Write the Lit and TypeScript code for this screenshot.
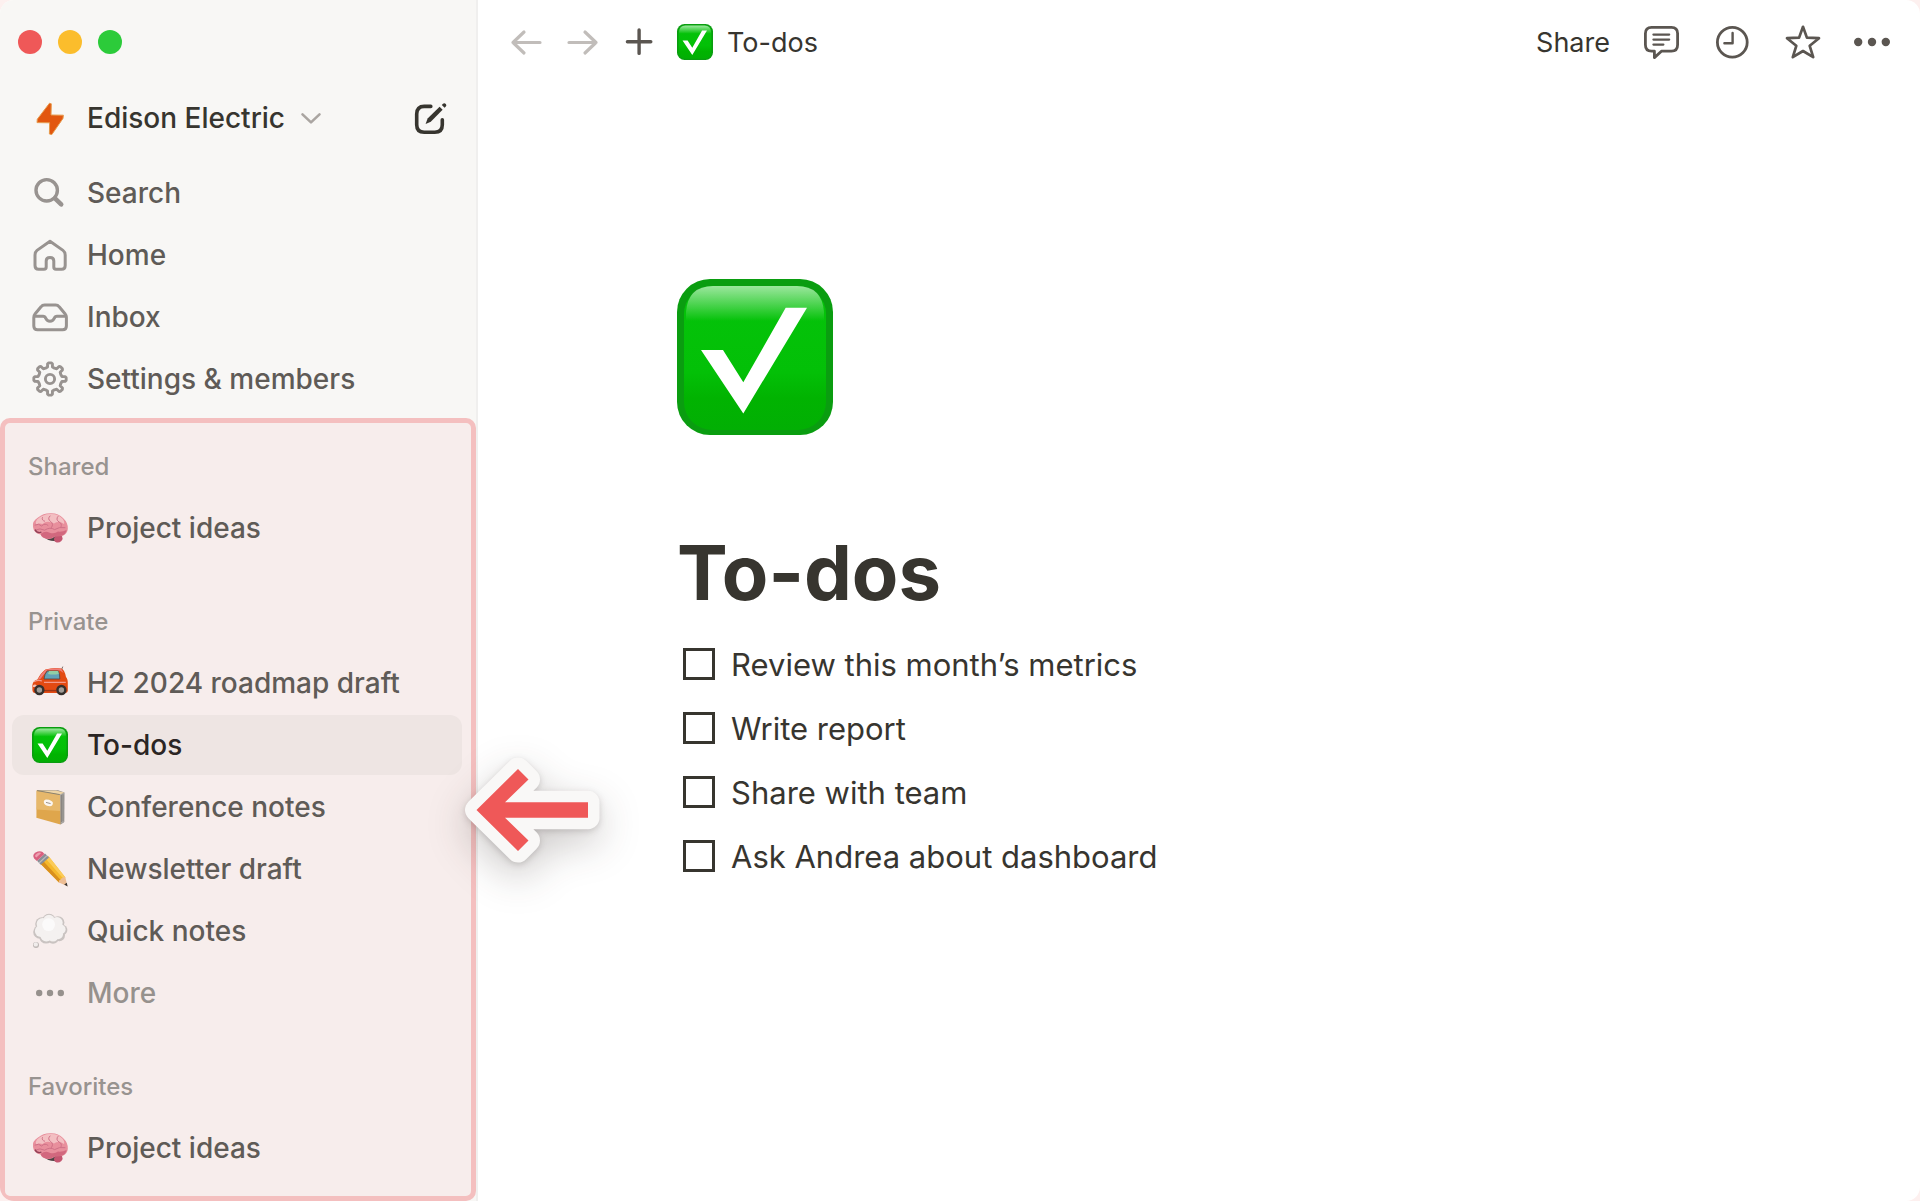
import { LitElement, html, css, svg, nothing, TemplateResult } from "lit";
import { customElement, property, state } from "lit/decorators.js";
import { classMap } from "lit/directives/class-map.js";

/** Outline of an eight-toothed cog centred on (18, 18). */
function cogPath(): string {
  const points: string[] = [];
  const teeth = 8;
  const step = (Math.PI * 2) / teeth;
  const at = (r: number, a: number) =>
    `${(18 + r * Math.sin(a)).toFixed(2)} ${(18 - r * Math.cos(a)).toFixed(2)}`;
  for (let i = 0; i < teeth; i++) {
    const a = i * step;
    points.push(at(12.2, a - step * 0.26), at(15.4, a - step * 0.2));
    points.push(at(16.2, a - step * 0.1), at(16.2, a + step * 0.1));
    points.push(at(15.4, a + step * 0.2), at(12.2, a + step * 0.26));
    points.push(at(11.7, a + step * 0.5));
  }
  return `M${points.join("L")}Z`;
}

const line = (width: number, body: TemplateResult) =>
  svg`<g fill="none" stroke="currentColor" stroke-width=${width} stroke-linecap="round" stroke-linejoin="round">${body}</g>`;

const GLYPHS: Record<string, TemplateResult> = {
  bolt: svg`<path d="M17.5 3.2 L19.3 3.8 L19 15 L31.4 15.2 L31 18.4 L19.8 34.6 L17.4 34 L17.6 22.8 L5 22.6 L5.3 19.2 Z"
    fill="#e2570f" stroke="#e79a4c" stroke-width="1" stroke-linejoin="round"/>`,
  search: svg`${line(3.4, svg`<circle cx="14.7" cy="15.3" r="10.7"/>`)}${line(4.6, svg`<path d="M23 23.4 L29.2 29.4"/>`)}`,
  home: line(3, svg`<path d="M18 4.2 L31 13.4 Q33.2 15 33.2 18 V28.5 Q33.2 32.3 29.6 32.3 H24 Q21.8 32.3 21.8 30 V24 Q21.8 20.6 18 20.6 Q14.2 20.6 14.2 24 V30 Q14.2 32.3 12 32.3 H6.6 Q3 32.3 3 28.5 V18 Q3 15 5 13.4 Z"/>`),
  inbox: line(3, svg`<path d="M12.6 6 H23.6 Q25.8 6 27.2 7.8 L33 14.8 Q34.4 16.5 34.4 18.6 V27 Q34.4 30.8 30.6 30.8 H5.6 Q1.8 30.8 1.8 27 V18.6 Q1.8 16.5 3.2 14.8 L9 7.8 Q10.4 6 12.6 6 Z"/><path d="M2.4 17.2 H11 Q13 17.2 13.8 19.4 Q15 22.2 18 22.2 Q21 22.2 22.2 19.4 Q23 17.2 25 17.2 H33.8"/>`),
  settings: line(2.9, svg`<path d=${cogPath()}/><circle cx="18" cy="18" r="4.6"/>`),
  more: svg`<g fill="currentColor"><circle cx="7.2" cy="18" r="3.2"/><circle cx="18" cy="18" r="3.2"/><circle cx="28.8" cy="18" r="3.2"/></g>`,
  compose: svg`${line(3.6, svg`<path d="M18.8 6.4 H12.2 Q4.7 6.4 4.7 13.9 V24.8 Q4.7 32.3 12.2 32.3 H22.8 Q30.3 32.3 30.3 24.8 V19.8"/>`)}
    <path d="M13.6 24 L15.6 18.6 L27.6 6.8 L30.6 9.8 L18.8 21.8 Z" fill="currentColor"/>
    <path d="M31 3.8 Q32.4 2.6 33.8 4 Q35 5.4 33.8 6.6 L32.6 7.8 L29.8 5 Z" fill="currentColor"/>`,
  chevron: line(2.6, svg`<path d="M9.5 14.4 L18 22.4 L26.5 14.4"/>`),
  back: line(3.2, svg`<path d="M5 18.5 H32 M16 8 L5 18.5 L16 29"/>`),
  forward: line(3.2, svg`<path d="M4 18.5 H31 M20 8 L31 18.5 L20 29"/>`),
  plus: line(3.4, svg`<path d="M5.4 17.7 H28.8 M17.1 6 V29.4"/>`),
  comment: svg`${line(2.8, svg`<path d="M7.6 3.3 H27.4 Q33.6 3.3 33.6 9.5 V20.8 Q33.6 27.2 27.4 27.2 H17.4 L10.4 33.6 V27.2 H7.6 Q1.4 27.2 1.4 20.8 V9.5 Q1.4 3.3 7.6 3.3 Z"/>`)}
    ${line(2.2, svg`<path d="M9.4 10.6 H25.2 M9.4 15.6 H25.2 M9.4 20.6 H19.4"/>`)}`,
  clock: svg`${line(2.8, svg`<circle cx="18.3" cy="18.2" r="14.9"/>`)}${line(2.4, svg`<path d="M18.6 9 V19.2 H10.4"/>`)}`,
  star: line(2.7, svg`<path d="M19 2.8 L22.9 13.6 L35 14.2 L25.7 21.8 L29.2 33.2 L19 27 L8.8 33.2 L12.3 21.8 L3 14.2 L15.1 13.6 Z"/>`),
  dots: svg`<g fill="currentColor"><circle cx="4.2" cy="18" r="4.2"/><circle cx="18" cy="18" r="4.2"/><circle cx="31.8" cy="18" r="4.2"/></g>`,
  brain: svg`
    <path d="M12 27 Q16 31 22 31 L27 32 L25 26 L14 24 Z" fill="#4c4344"/>
    <path d="M1 17 Q0 11 6 7.5 Q11 3.2 18 3.2 Q26 2.6 31 8 Q36.4 13 35.8 19 Q35.4 23.4 31.4 25.4 Q27 27.4 23 26.6 Q20 29.6 15 28.8 Q10 28.4 8.6 24.6 Q1.8 23.4 1 17 Z" fill="#e88f9c"/>
    <path d="M5 9.5 Q11 4 18 4 Q26 3.4 30.6 8.8 Q33 12 32 14 Q27 10.5 22 13.5 Q15 10 10.5 14 Q7 13 4 14.6 Q3 12 5 9.5 Z" fill="#f3bfc2"/>
    <path d="M22.6 27 Q26 24.8 30 26 Q31.4 28.6 29.4 31 Q26.6 33.4 23.6 32 Q21 30 22.6 27 Z" fill="#c45570"/>
    <path d="M8.6 24 Q13 20.6 17 22.4 Q22 24.6 26 21.6 Q31 22 34.6 20 Q34 24 30.6 25.2 Q26 27 23 26.2 Q19 29.4 14.4 28.4 Q9.8 27.8 8.6 24 Z" fill="#d2687e"/>
    <g fill="none" stroke="#cf7187" stroke-width="1" stroke-linecap="round">
      <path d="M3 15 Q7 13 9.6 16 Q13 12.6 16 15.4 M18 6 Q15 9 18.6 11.4 Q22 14 19.4 17.6 M26 6.4 Q23.4 9.4 27 12 Q30.4 13.4 29 17 M3.6 20 Q8 17.6 12.6 20.2 Q18 16.6 22.6 19.6 Q27 16.6 33 17.6 M10.4 7.6 Q9.4 10.4 12.6 11.2"/>
    </g>
    <path d="M3 19.6 Q5 23.6 9.4 22.2" fill="none" stroke="#8f4056" stroke-width="1.3"/>`,
  car: svg`
    <path d="M29.6 4.6 L30.8 1.6" stroke="#7c6d6b" stroke-width="1"/>
    <path d="M13.4 4.6 Q22 2 29.4 3.6 Q32.6 5 34 12 Q36 14 35.8 19 V26 Q35.6 28 33 28 H3 Q.6 28 .4 25 V20 Q1 16 5.4 14.6 Q8.8 8 13.4 4.6 Z" fill="#e34a12"/>
    <path d="M13.6 4.8 Q22 2.4 29.2 3.8 L31.6 8 L28 5.4 H15 L8.6 13.8 L5.6 14.8 Q9 8.4 13.6 4.8 Z" fill="#ef7c78"/>
    <path d="M15.2 6 H26.4 Q28 9.6 27.8 14 H12 Q12.4 9 15.2 6 Z" fill="#62a2b7" stroke="#54433f" stroke-width=".8"/>
    <path d="M17 6 H26.2 L26.8 9 Q21 10 16 9 Z" fill="#91cfa5"/>
    <path d="M2 16.8 Q6 14.6 10 16 M12 17.4 H33.8" stroke="#f39a8c" stroke-width="1.2" fill="none"/>
    <path d="M1 20.4 Q2.8 18.8 4.8 20.4 L4 22 H1 Z" fill="#f6c0b6"/>
    <path d="M12 25.6 H24" stroke="#9d3516" stroke-width="1.4"/>
    <g fill="#35302d"><circle cx="7.4" cy="25" r="5.2"/><circle cx="29.4" cy="25" r="5.2"/></g>
    <g fill="#a29d98"><circle cx="7.4" cy="25" r="2.7"/><circle cx="29.4" cy="25" r="2.7"/></g>`,
  notebook: svg`
    <path d="M5.4 1 L26 1.2 L32.4 3.4 L32.2 33 L28.6 35.4 Z" fill="#8d8780"/>
    <path d="M27.6 5 L32.2 3.6 V33 L28.6 35.2 Z" fill="#a9a6a3"/>
    <path d="M29.4 6 V33 M31 5.4 V32.2" stroke="#77726e" stroke-width=".7"/>
    <path d="M4.6 1.4 L28 5.4 L28.4 35.6 L4.4 28.8 Z" fill="#dfa64c"/>
    <path d="M4.6 1.4 L28 5.4 V22 L4.6 20.6 Z" fill="#e7b86b"/>
    <path d="M4.6 1.4 L28 5.4 L32.2 3.6 L24 1.4 Z" fill="#efd5a5"/>
    <path d="M5 1.6 L27.8 5.6" stroke="#8b826f" stroke-width="1"/>
    <path d="M13.8 10.6 Q17 10.4 19.4 12 Q21.8 13.2 20.4 16 Q19.2 18 15 16.8 Q11.6 15.6 11.8 12.6 Q12 11 13.8 10.6 Z" fill="#fbf6f1"/>
    <path d="M14 13.4 L18.6 14.6" stroke="#9c958e" stroke-width="1"/>`,
  pencil: svg`
    <path d="M8.2 12.6 L16.6 5.2 L33.4 26.4 L27 31.6 Z" fill="#f5b82b"/>
    <path d="M8.2 12.6 L11.2 10 L29.6 30 L27 31.6 Z" fill="#d98f1d"/>
    <path d="M13.8 7.8 L16.6 5.2 L33.4 26.4 L31.4 27.8 Z" fill="#fbcb58"/>
    <path d="M27 31.6 Q26.4 29 28.6 28.8 Q29 26.6 31 27 Q31.4 25.2 33.4 26.4 L35.4 35.2 Z" fill="#edbd93"/>
    <path d="M32.2 33.6 L34.8 31.8 L35.6 35.4 Z" fill="#3b3635"/>
    <path d="M5 9.8 L13 2.6 L17 6.6 L8.8 13.8 Z" fill="#8a8e95"/>
    <path d="M7 12 L15 4.6" stroke="#b9bcc1" stroke-width="1.2"/>
    <path d="M2.2 7.4 Q-.2 4.2 3.6 1.6 Q7.6 -1 10.6 1 L12.4 3 L4.8 10 Z" fill="#d9607f"/>
    <path d="M3.2 5.6 Q2.4 4 5 2.4 Q7.4 .8 9.2 2 L4.4 6.6 Z" fill="#ee9fb0"/>`,
  thought: svg`
    <g fill="#c9c3c1">
      <circle cx="10" cy="11" r="6.8"/><circle cx="17" cy="7.6" r="6.8"/><circle cx="26" cy="9.6" r="6.4"/><circle cx="30" cy="17" r="5.4"/>
      <circle cx="8" cy="19" r="6.8"/><circle cx="14" cy="24" r="6.6"/><circle cx="21" cy="24.8" r="6"/><circle cx="27.4" cy="22.6" r="5.6"/>
    </g>
    <g fill="#f4f1f0">
      <circle cx="10.6" cy="11" r="6"/><circle cx="17" cy="7.6" r="5.9"/><circle cx="25" cy="9.8" r="5.7"/><circle cx="28.8" cy="16.4" r="4.8"/>
      <circle cx="9" cy="18" r="6.1"/><circle cx="14.4" cy="22.6" r="6"/><circle cx="21" cy="23.2" r="5.4"/><circle cx="26" cy="21.2" r="5"/>
      <circle cx="18" cy="15" r="9"/>
    </g>
    <circle cx="16.6" cy="11.6" r="6.4" fill="#fbfafa"/>
    <circle cx="4" cy="32" r="3" fill="#bdb6b4"/><circle cx="3.8" cy="31.4" r="2.2" fill="#f1edec"/>`,
};

@customElement("ui-glyph")
export class UiGlyph extends LitElement {
  @property() name = "";

  static styles = css`
    :host {
      display: block;
      flex: none;
      width: 36px;
      height: 36px;
    }
    .glyph {
      display: block;
      width: 100%;
      height: 100%;
      overflow: visible;
    }
  `;

  private checkMark() {
    return html`<svg class="glyph" viewBox="0 0 156 156" aria-hidden="true">
      <defs>
        <linearGradient id="face" x1="0" y1="0" x2="0" y2="1">
          <stop offset="0" stop-color="#05c30a" />
          <stop offset=".6" stop-color="#03c007" />
          <stop offset=".78" stop-color="#01b301" />
          <stop offset="1" stop-color="#02af04" />
        </linearGradient>
        <linearGradient id="shine" x1="0" y1="0" x2="0" y2="1">
          <stop offset="0" stop-color="#fff" stop-opacity=".6" />
          <stop offset="1" stop-color="#fff" stop-opacity="0" />
        </linearGradient>
      </defs>
      <rect width="156" height="156" rx="33" fill="#0a9d10" />
      <rect x="7" y="7" width="142" height="144" rx="28" fill="url(#face)" />
      <path d="M9 42 V33 Q11 7 36 7 H120 Q145 7 147 33 V42 Z" fill="url(#shine)" />
      <path d="M24 71 H46 L66.300 103.300 L108.700 28.700 H130 L66.300 134.500 Z" fill="#fff" />
    </svg>`;
  }

  render() {
    if (this.name === "check") return this.checkMark();
    return html`<svg class="glyph" viewBox="0 0 36 36" aria-hidden="true">${GLYPHS[this.name] ?? nothing}</svg>`;
  }
}

interface Entry {
  icon: string;
  label: string;
  active?: boolean;
  muted?: boolean;
}

const MENU: Entry[] = [
  { icon: "search", label: "Search" },
  { icon: "home", label: "Home" },
  { icon: "inbox", label: "Inbox" },
  { icon: "settings", label: "Settings & members" },
];

const SECTIONS: { title: string; pages: Entry[] }[] = [
  { title: "Shared", pages: [{ icon: "brain", label: "Project ideas" }] },
  {
    title: "Private",
    pages: [
      { icon: "car", label: "H2 2024 roadmap draft" },
      { icon: "check", label: "To-dos", active: true },
      { icon: "notebook", label: "Conference notes" },
      { icon: "pencil", label: "Newsletter draft" },
      { icon: "thought", label: "Quick notes" },
      { icon: "more", label: "More", muted: true },
    ],
  },
  { title: "Favorites", pages: [{ icon: "brain", label: "Project ideas" }] },
];

@customElement("side-bar")
export class SideBar extends LitElement {
  static styles = css`
    :host {
      display: flex;
      flex-direction: column;
      box-sizing: border-box;
      background: #f8f7f5;
      border-right: 2px solid #f0efee;
      color: #5f5b57;
      font-size: 28px;
      font-weight: 500;
    }
    .lights {
      display: flex;
      align-items: center;
      gap: 16px;
      height: 84px;
      padding-left: 18px;
    }
    .light {
      width: 24px;
      height: 24px;
      padding: 0;
      border: 0;
      border-radius: 50%;
    }
    .close { background: #ef5858; }
    .minimize { background: #fbbd2c; }
    .zoom { background: #2ccb3a; }
    .workspace {
      display: flex;
      align-items: center;
      justify-content: space-between;
      margin: 4px 28px 15px 12px;
      color: #37352f;
    }
    button {
      font: inherit;
      color: inherit;
      background: none;
      border: 0;
      padding: 0;
    }
    .switcher {
      display: flex;
      align-items: center;
      height: 60px;
      padding-left: 20px;
      gap: 19px;
    }
    .name {
      display: flex;
      align-items: center;
      gap: 8px;
    }
    .chevron { color: #aaa5a1; }
    ul {
      display: flex;
      flex-direction: column;
      gap: 2px;
      margin: 0;
      padding: 0;
      list-style: none;
    }
    .menu { margin: 0 14px 9px 12px; }
    .row {
      display: flex;
      align-items: center;
      gap: 19px;
      height: 60px;
      padding-left: 20px;
      border-radius: 12px;
      color: inherit;
      text-decoration: none;
      white-space: nowrap;
    }
    .menu ui-glyph { color: #989390; }
    .active {
      background: #eee5e3;
      color: #2b2524;
    }
    .muted { color: #96918d; }
    .pages {
      position: relative;
      flex: 1;
      display: flex;
      flex-direction: column;
      gap: 48px;
      padding: 28px 9px 12px 7px;
      border: 5px solid #f4bfbf;
      border-radius: 10px;
      background: #f7edec;
    }
    h2 {
      margin: 0 0 15px 16px;
      font-size: 24px;
      line-height: 32px;
      font-weight: 500;
      color: #989390;
    }
    .pointer {
      position: absolute;
      z-index: 1;
      top: 50%;
      left: calc(100% - 6px);
      width: 136px;
      height: 106px;
      transform: translateY(-50%);
      overflow: visible;
      pointer-events: none;
      filter: drop-shadow(0 2px 3px rgba(40, 30, 25, 0.18)) drop-shadow(0 14px 20px rgba(40, 30, 25, 0.24));
    }
  `;

  private row = (entry: Entry) => html`
    <li>
      <a
        class=${classMap({ row: true, active: !!entry.active, muted: !!entry.muted })}
        href="#"
        aria-current=${entry.active ? "page" : nothing}
      >
        <ui-glyph name=${entry.icon}></ui-glyph>
        <span>${entry.label}</span>
      </a>
    </li>
  `;

  render() {
    return html`
      <div class="lights">
        <button class="light close" aria-label="Close"></button>
        <button class="light minimize" aria-label="Minimize"></button>
        <button class="light zoom" aria-label="Zoom"></button>
      </div>
      <div class="workspace">
        <button class="switcher">
          <ui-glyph name="bolt"></ui-glyph>
          <span class="name">Edison Electric<ui-glyph class="chevron" name="chevron"></ui-glyph></span>
        </button>
        <button aria-label="New page"><ui-glyph name="compose"></ui-glyph></button>
      </div>
      <nav class="menu" aria-label="Main">
        <ul>${MENU.map(this.row)}</ul>
      </nav>
      <nav class="pages" aria-label="Pages">
        ${SECTIONS.map(
          (section) => html`<section>
            <h2>${section.title}</h2>
            <ul>${section.pages.map(this.row)}</ul>
          </section>`
        )}
        <svg class="pointer" viewBox="0 0 136 106" aria-hidden="true">
          <path
            d="M11.500 53 L53 12 L63.500 22.500 L40 45.300 H123 V60.700 H40 L63.500 83.500 L53 94 Z"
            fill="#f9f8f7" stroke="#f9f8f7" stroke-width="23" stroke-linejoin="round"
          />
          <path d="M11.500 53 L53 12 L63.500 22.500 L40 45.300 H123 V60.700 H40 L63.500 83.500 L53 94 Z" fill="#ef5858" />
        </svg>
      </nav>
    `;
  }
}

@customElement("top-bar")
export class TopBar extends LitElement {
  static styles = css`
    :host {
      display: flex;
      align-items: center;
      justify-content: space-between;
      height: 84px;
      padding: 0 30px;
      font-size: 27px;
      color: #37352f;
    }
    button {
      padding: 0;
      border: 0;
      background: none;
      font: inherit;
      color: inherit;
    }
    .group,
    .history,
    .crumb {
      display: flex;
      align-items: center;
    }
    .group { gap: 19px; }
    .history { gap: 21px; }
    .crumb {
      gap: 14px;
      color: inherit;
      text-decoration: none;
    }
    .actions {
      display: flex;
      align-items: center;
      gap: 34px;
    }
    .faint { color: #c1bdba; }
    .tool { color: #5b5651; }
  `;

  private tool(name: string, label: string, faint = false) {
    return html`<button class=${faint ? "faint" : "tool"} aria-label=${label}><ui-glyph name=${name}></ui-glyph></button>`;
  }

  render() {
    return html`
      <div class="group">
        <div class="history">
          ${this.tool("back", "Back", true)} ${this.tool("forward", "Forward", true)} ${this.tool("plus", "New tab")}
        </div>
        <a class="crumb" href="#"><ui-glyph name="check"></ui-glyph><span>To-dos</span></a>
      </div>
      <div class="actions">
        <button>Share</button>
        ${this.tool("comment", "Comments")} ${this.tool("clock", "Updates")} ${this.tool("star", "Favorite")}
        ${this.tool("dots", "More options")}
      </div>
    `;
  }
}

@customElement("todo-page")
export class TodoPage extends LitElement {
  @state() private items = [
    { text: "Review this month’s metrics", done: false },
    { text: "Write report", done: false },
    { text: "Share with team", done: false },
    { text: "Ask Andrea about dashboard", done: false },
  ];

  static styles = css`
    :host {
      display: block;
      padding: 195px 40px 80px 199px;
      color: #37352f;
    }
    .cover {
      width: 156px;
      height: 156px;
    }
    h1 {
      margin: 90px 0 13px;
      font-size: 76px;
      line-height: 94px;
      font-weight: 700;
    }
    ul {
      margin: 0;
      padding: 0;
      list-style: none;
    }
    label {
      display: flex;
      align-items: center;
      gap: 16px;
      height: 64px;
      padding-left: 6px;
      font-size: 31px;
    }
    input {
      appearance: none;
      flex: none;
      width: 32px;
      height: 32px;
      margin: 0;
      border: 3px solid #37352f;
    }
    input:checked { background: #37352f; }
  `;

  private toggle(index: number) {
    this.items = this.items.map((item, i) => (i === index ? { ...item, done: !item.done } : item));
  }

  render() {
    return html`
      <ui-glyph class="cover" name="check"></ui-glyph>
      <h1>To-dos</h1>
      <ul>
        ${this.items.map(
          (item, i) => html`<li>
            <label><input type="checkbox" .checked=${item.done} @change=${() => this.toggle(i)} />${item.text}</label>
          </li>`
        )}
      </ul>
    `;
  }
}

@customElement("app-root")
export class AppRoot extends LitElement {
  static styles = css`
    :host {
      display: block;
      background: #fdf0ef;
      font-family: Inter, "Liberation Sans", sans-serif;
    }
    .window {
      display: grid;
      grid-template-columns: 478px minmax(0, 1fr);
      min-height: 100vh;
      border-radius: 14px;
      overflow: hidden;
      background: #fff;
    }
  `;

  render() {
    return html`
      <div class="window">
        <side-bar></side-bar>
        <main>
          <top-bar></top-bar>
          <todo-page></todo-page>
        </main>
      </div>
    `;
  }
}
